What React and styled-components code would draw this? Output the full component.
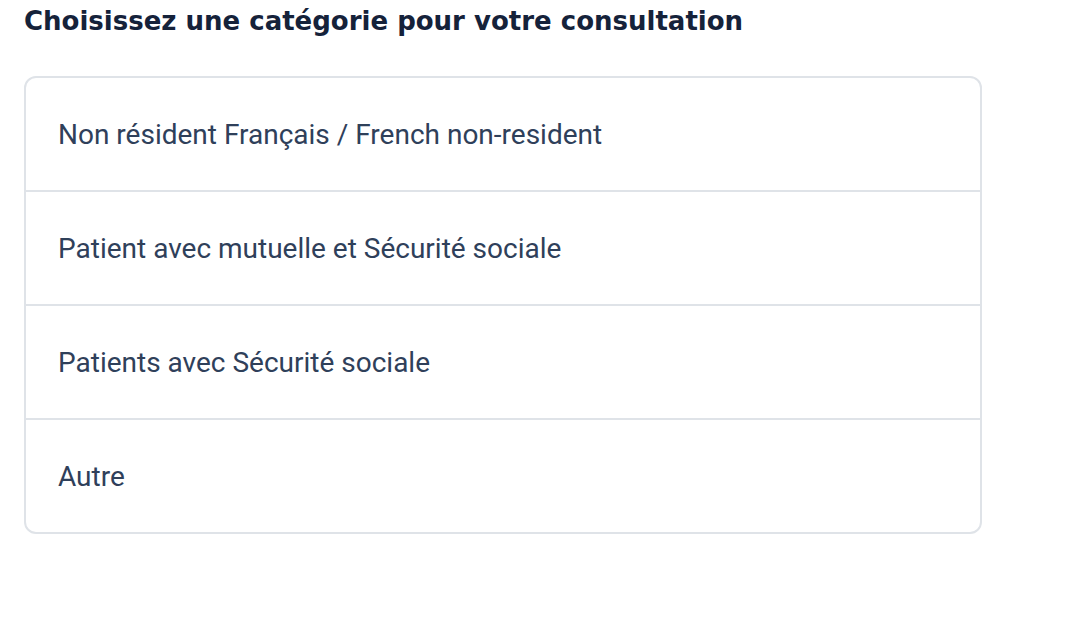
import React from "react";
import styled, { createGlobalStyle } from "styled-components";

const GlobalStyle = createGlobalStyle`
  body {
    margin: 0;
    background: #fff;
    font-family: Roboto, "Liberation Sans", sans-serif;
  }
`;

const Page = styled.div`
  padding: 4px 24px 0 24px;
  width: 958px;
`;

const Title = styled.h2`
  margin: 0 0 38px 0;
  font-family: "DejaVu Sans", sans-serif;
  font-weight: 700;
  font-size: 26px;
  line-height: 34px;
  color: #15223a;
`;

const List = styled.div`
  border: 2px solid #dfe3e8;
  border-radius: 12px;
  display: flex;
  flex-direction: column;
`;

const Option = styled.div`
  height: 112px;
  display: flex;
  align-items: center;
  padding: 0 32px;
  font-size: 28px;
  color: #2f405a;
  border-top: ${(p) => (p.$first ? "none" : "2px solid #dfe3e8")};
`;

const options = [
  "Non résident Français / French non-resident",
  "Patient avec mutuelle et Sécurité sociale",
  "Patients avec Sécurité sociale",
  "Autre",
];

const App = () => {
  return (
    <>
      <GlobalStyle />
      <Page>
        <Title>Choisissez une catégorie pour votre consultation</Title>
        <List>
          {options.map((o, i) => (
            <Option key={o} $first={i === 0}>
              {o}
            </Option>
          ))}
        </List>
      </Page>
    </>
  );
};

export default App;
